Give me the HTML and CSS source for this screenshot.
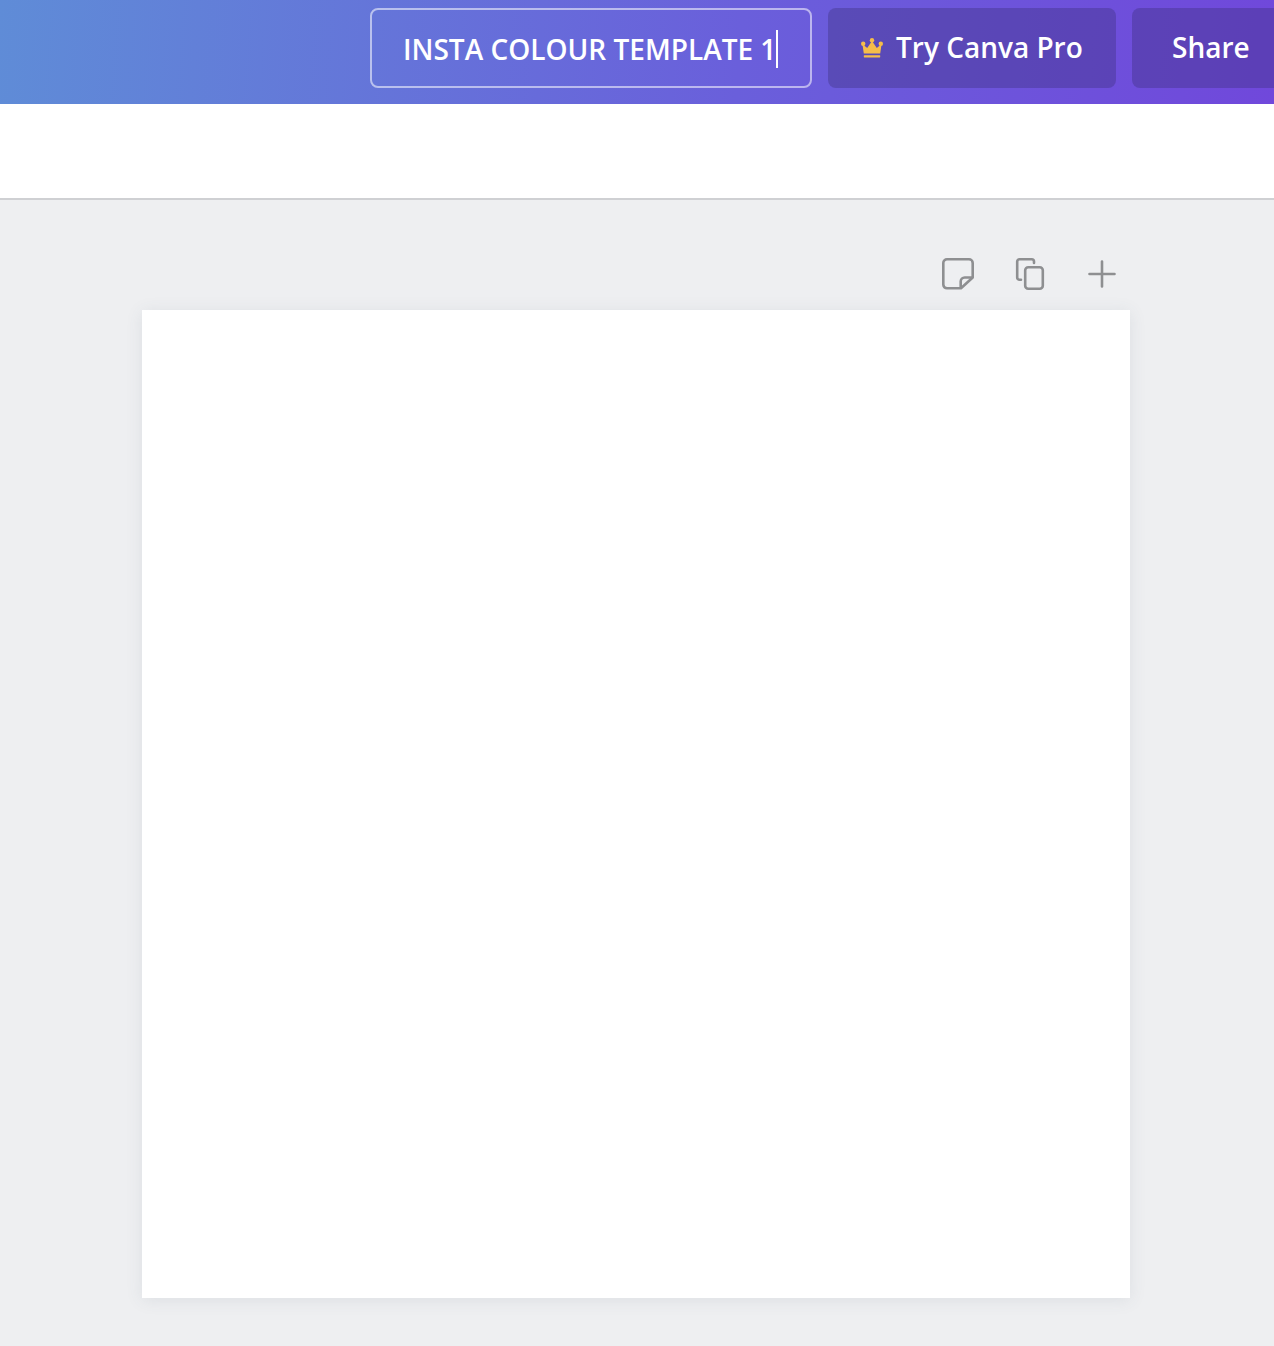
FILE: index.html
```html
<!DOCTYPE html>
<html lang="en">
<head>
<meta charset="utf-8">
<title>INSTA COLOUR TEMPLATE 1</title>
<link rel="stylesheet" href="styles.css">
</head>
<body>
<header class="topbar">
  <div class="title-box"><span class="title-text">INSTA COLOUR TEMPLATE 1</span><span class="caret"></span></div>
  <button class="btn btn-pro">
    <svg class="crown" width="24" height="20" viewBox="0 0 24 20" aria-hidden="true">
      <circle cx="12" cy="2.300" r="2.200" fill="#f6bd49"/>
      <circle cx="3.200" cy="5.800" r="2.200" fill="#f6bd49"/>
      <circle cx="20.800" cy="5.800" r="2.200" fill="#f6bd49"/>
      <path fill="#f6bd49" d="M2.400 6 7.200 10 12 3l4.800 7L21.600 6l-1.400 9.400H3.800Z"/>
      <rect x="3.800" y="17.200" width="16.400" height="2.200" rx=".6" fill="#f6bd49"/>
    </svg>
    <span class="btn-label">Try Canva Pro</span>
  </button>
  <button class="btn btn-share"><span class="btn-label">Share</span></button>
</header>
<div class="toolbar"></div>
<main class="workspace">
  <div class="page-tools">
    <svg class="tool" width="36" height="36" viewBox="0 0 36 36" aria-hidden="true">
      <path fill="none" stroke="#8e8f91" stroke-width="2.600" stroke-linejoin="round" d="M7 3.300h22a3.700 3.700 0 0 1 3.700 3.700v14.500L21 32.300H7A3.700 3.700 0 0 1 3.300 28.600V7A3.700 3.700 0 0 1 7 3.300Z"/>
      <path fill="none" stroke="#8e8f91" stroke-width="2.600" stroke-linejoin="round" d="M32.700 21.500h-8a4 4 0 0 0-4 4v6.800"/>
    </svg>
    <svg class="tool" width="36" height="36" viewBox="0 0 36 36" aria-hidden="true">
      <path fill="none" stroke="#8e8f91" stroke-width="2.600" stroke-linecap="round" d="M22 7V5.500a2.300 2.300 0 0 0-2.300-2.300H7.500a2.300 2.300 0 0 0-2.300 2.300v16a2.300 2.300 0 0 0 2.300 2.300H9"/>
      <rect x="13.200" y="11.300" width="17.600" height="21.400" rx="3" fill="none" stroke="#8e8f91" stroke-width="2.600"/>
    </svg>
    <svg class="tool" width="36" height="36" viewBox="0 0 36 36" aria-hidden="true">
      <path fill="none" stroke="#8e8f91" stroke-width="2.600" stroke-linecap="round" d="M18 5.500v25M5.500 18h25"/>
    </svg>
  </div>
  <section class="page"></section>
</main>
</body>
</html>
```

FILE: styles.css
```css
html, body {
  margin: 0;
  padding: 0;
  height: 100%;
  overflow: hidden;
  background: #eeeff1;
  font-family: "Open Sans", sans-serif;
}

.topbar {
  display: flex;
  gap: 16px;
  align-items: flex-start;
  box-sizing: border-box;
  height: 104px;
  padding: 8px 0 0 370px;
  background: linear-gradient(94deg, #5f8cd7 0%, #6a5fdb 58%, #7048db 100%);
  white-space: nowrap;
}

.title-box {
  display: flex;
  align-items: center;
  flex: none;
  box-sizing: border-box;
  width: 442px;
  height: 80px;
  padding: 2px 31px 0;
  border: 2px solid rgba(255, 255, 255, 0.55);
  border-radius: 8px;
  color: #fff;
  font-size: 28px;
}

.title-text {
  font-weight: 600;
}

.caret {
  width: 2px;
  height: 38px;
  background: #fff;
}

.btn {
  display: flex;
  align-items: center;
  flex: none;
  box-sizing: border-box;
  height: 80px;
  border: 0;
  border-radius: 8px;
  background: rgba(57, 46, 120, 0.36);
  color: #fff;
  font-family: inherit;
  font-size: 28px;
  font-weight: 600;
}

.btn-pro {
  gap: 12px;
  width: 288px;
  padding: 0 0 2px 32px;
}

.btn-share {
  padding: 0 40px 2px;
}

.crown {
  flex: none;
  margin-top: 2px;
}

.toolbar {
  box-sizing: border-box;
  height: 96px;
  background: #fff;
  border-bottom: 2px solid #cfd0d3;
}

.workspace {
  padding: 0 144px 0 142px;
}

.page-tools {
  display: flex;
  justify-content: flex-end;
  gap: 36px;
  height: 110px;
  box-sizing: border-box;
  padding: 56px 10px 0 0;
}

.page {
  width: 988px;
  height: 988px;
  background: #fff;
  box-shadow: 0 2px 16px rgba(64, 87, 109, 0.1);
}
```
